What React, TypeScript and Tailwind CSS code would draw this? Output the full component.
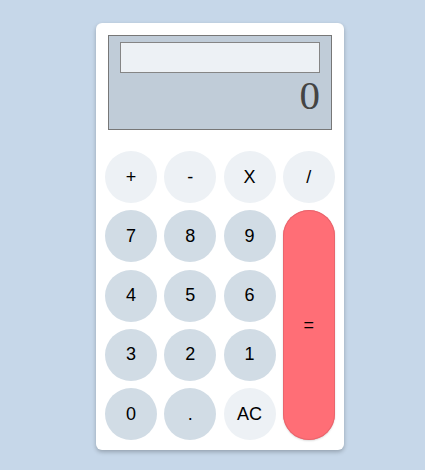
import React, { useState } from 'react';

const light = 'bg-[#edf1f5]';
const dark = 'bg-[#d1dce5]';

export default function App() {
  const [value, setValue] = useState<string>('0');

  const btn = (label: string, tone: string) => (
    <button
      key={label}
      onClick={() => setValue(label)}
      className={`h-[52px] w-[52px] rounded-full ${tone} text-[18px] text-black flex items-center justify-center`}
    >
      {label}
    </button>
  );

  return (
    <div className="min-h-[470px] w-full bg-[#c6d7e9] pl-[96px] pt-[23px] font-['Liberation_Sans',Arial,sans-serif]">
      <div className="w-[248px] rounded-md bg-white px-[12px] pt-[12px] pb-[10px] shadow-[0_2px_4px_rgba(0,0,0,0.25)]">
        <div className="h-[95px] border border-[#777] bg-[#c0ccd8] px-[11px] pt-[6px]">
          <input
            readOnly
            className="block h-[31px] w-full border-[1.5px] border-[#858585] bg-[#edf1f5] outline-none"
          />
          <div className="mt-0 text-right font-['Liberation_Serif','Times_New_Roman',serif] text-[41px] leading-[44px] text-[#444]">
            {value}
          </div>
        </div>

        <div className="-mx-[3px] mt-[21px] grid grid-cols-[repeat(4,52px)] gap-[7.25px]">
          {btn('+', light)}
          {btn('-', light)}
          {btn('X', light)}
          {btn('/', light)}
          {btn('7', dark)}
          {btn('8', dark)}
          {btn('9', dark)}
          <button
            onClick={() => setValue('=')}
            className="row-span-4 w-[52px] rounded-full bg-[#ff6e76] text-[18px] text-black shadow-[inset_0_0_0_1px_#e9656d,0_1px_2px_rgba(0,0,0,0.15)]"
          >
            =
          </button>
          {btn('4', dark)}
          {btn('5', dark)}
          {btn('6', dark)}
          {btn('3', dark)}
          {btn('2', dark)}
          {btn('1', dark)}
          {btn('0', dark)}
          {btn('.', dark)}
          {btn('AC', light)}
        </div>
      </div>
    </div>
  );
}
